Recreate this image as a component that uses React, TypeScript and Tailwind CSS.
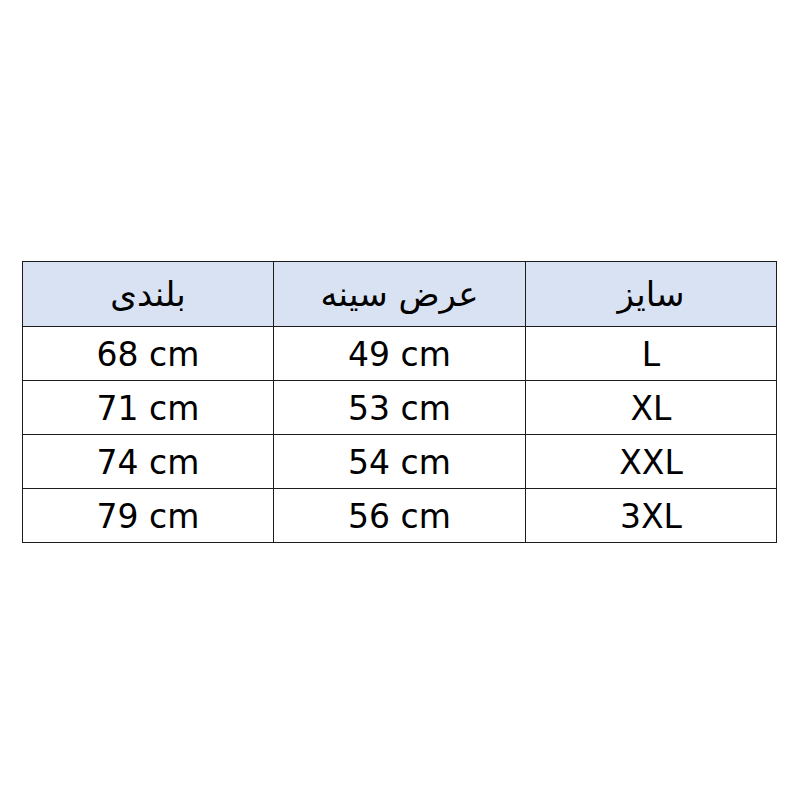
import React from "react";

const rows = [
  { size: "L", chest: "49 cm", height: "68 cm" },
  { size: "XL", chest: "53 cm", height: "71 cm" },
  { size: "XXL", chest: "54 cm", height: "74 cm" },
  { size: "3XL", chest: "56 cm", height: "79 cm" },
];

export default function App() {
  return (
    <div
      className="w-[800px] h-[800px] bg-white pt-[261px] pl-[22px]"
      style={{ fontFamily: '"DejaVu Sans", sans-serif' }}
    >
      <table dir="rtl" className="w-[755px] border-collapse text-black">
        <thead>
          <tr className="h-[65px] bg-[#d9e2f3] text-[34px]">
            <th className="w-[251px] border border-[#1c1c1c] font-normal">سایز</th>
            <th className="w-[252px] border border-[#1c1c1c] font-normal">عرض سینه</th>
            <th className="w-[251px] border border-[#1c1c1c] font-normal">بلندی</th>
          </tr>
        </thead>
        <tbody>
          {rows.map((r) => (
            <tr key={r.size} className="h-[54px] text-[33px] leading-none">
              <td className="border border-[#1c1c1c] text-center pt-[2px]">{r.size}</td>
              <td dir="ltr" className="border border-[#1c1c1c] text-center pt-[2px]">{r.chest}</td>
              <td dir="ltr" className="border border-[#1c1c1c] text-center pt-[2px]">{r.height}</td>
            </tr>
          ))}
        </tbody>
      </table>
    </div>
  );
}
